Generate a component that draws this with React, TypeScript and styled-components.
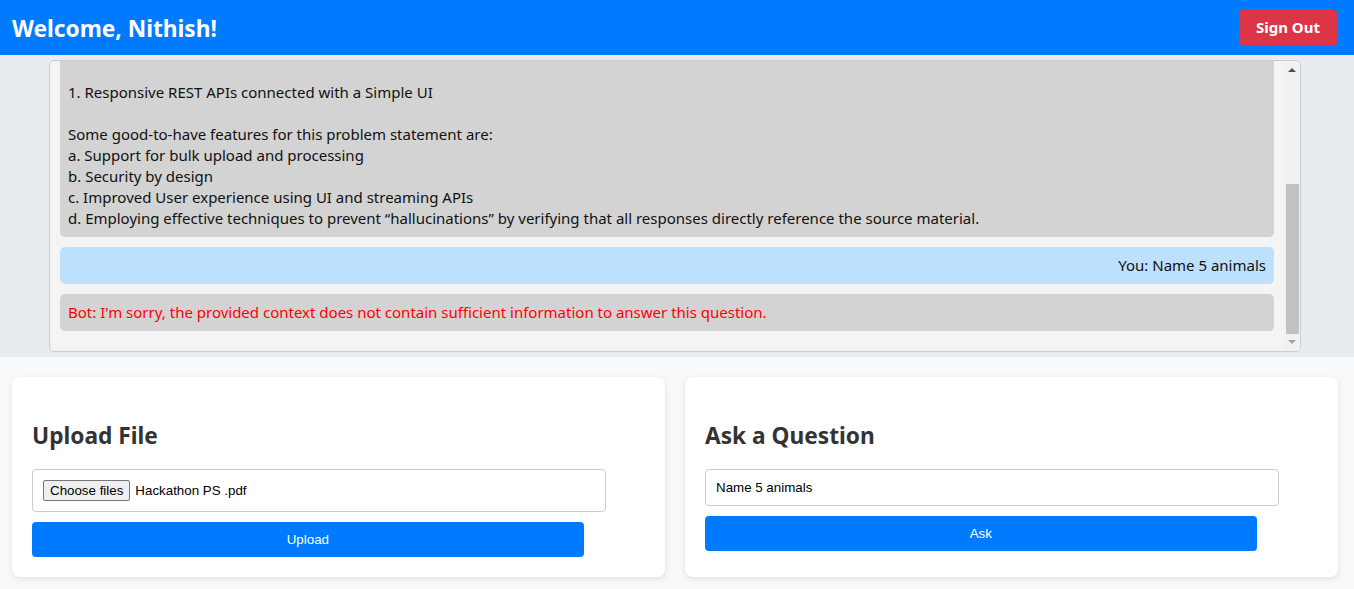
import React, { useLayoutEffect, useRef } from 'react';
import styled, { createGlobalStyle } from 'styled-components';

const GlobalStyle = createGlobalStyle`
  body {
    margin: 0;
    font-family: "Noto Sans", "Open Sans", sans-serif;
    background: #f8f9fa;
    color: #111;
  }
`;

const Header = styled.header`
  display: flex;
  align-items: center;
  justify-content: space-between;
  height: 55px;
  padding: 0 17px 0 12px;
  background: #007bff;
  color: #fff;
`;

const Title = styled.h1`
  margin: 0;
  padding-top: 1px;
  font-size: 22.7px;
  font-weight: 700;
`;

const SignOutButton = styled.button`
  height: 37px;
  padding: 0 17px 1px;
  border: none;
  border-radius: 5px;
  background: #dc3545;
  color: #fff;
  font-family: inherit;
  font-size: 15px;
  font-weight: 700;
  cursor: pointer;
`;

const ChatSection = styled.section`
  background: #e9ecef;
  padding: 5px 0 5px 49px;
`;

const ChatFrame = styled.div`
  position: relative;
  box-sizing: border-box;
  width: 1252px;
  height: 292px;
  overflow: hidden;
  background: #f4f4f4;
  border: 1px solid #ccc;
  border-radius: 5px;
`;

const ChatScroll = styled.div`
  box-sizing: border-box;
  height: 100%;
  padding: 10px 26px 10px 10px;
  overflow-y: auto;
  scrollbar-width: none;

  &::-webkit-scrollbar {
    display: none;
  }
`;

// drawn scrollbar: the runner's browser hides native ones
const ScrollBar = styled.div`
  position: absolute;
  top: 0;
  right: 0;
  bottom: 0;
  width: 16px;
  display: flex;
  flex-direction: column;
  background: #f1f1f1;
`;

const ScrollButton = styled.div<{ $dir: 'up' | 'down' }>`
  height: 17px;
  display: flex;
  align-items: center;
  justify-content: center;

  &::before {
    content: '';
    width: 0;
    height: 0;
    border-left: 4px solid transparent;
    border-right: 4px solid transparent;
    ${(p) =>
      p.$dir === 'up'
        ? 'border-bottom: 4px solid #505050; margin-top: 1px;'
        : 'border-top: 4px solid #a3a3a3; margin-bottom: 1px;'}
  }
`;

const ScrollRail = styled.div`
  flex: 1;
  display: flex;
  flex-direction: column;
  justify-content: flex-end;
  padding: 0 1px 0 2px;
`;

const ScrollThumb = styled.div`
  height: 150px;
  background: #c1c1c1;
`;

const Message = styled.div<{ $from: 'bot' | 'user'; $error?: boolean }>`
  margin-bottom: 10px;
  padding: 8px;
  border-radius: 5px;
  font-size: 15px;
  line-height: 21px;
  white-space: pre-wrap;
  background: ${(p) => (p.$from === 'user' ? '#bde0fd' : '#d3d3d3')};
  text-align: ${(p) => (p.$from === 'user' ? 'right' : 'left')};
  color: ${(p) => (p.$error ? '#ff0000' : '#111')};
`;

const Panels = styled.main`
  display: flex;
  gap: 20px;
  padding: 20px 16px 12px 12px;
`;

const Card = styled.div`
  flex: 1;
  padding: 20px;
  background: #fff;
  border-radius: 8px;
  box-shadow: 0 2px 6px rgba(0, 0, 0, 0.1);
`;

const CardTitle = styled.h2`
  margin: 20px 0 17px;
  padding-top: 3px;
  font-size: 22.7px;
  line-height: 32px;
  font-weight: 700;
  color: #333;
`;

const FileField = styled.label`
  display: flex;
  align-items: center;
  gap: 5px;
  width: 90%;
  height: 21px;
  padding: 10px;
  border: 1px solid #ccc;
  border-radius: 4px;
  font-family: "Liberation Sans", Arial, sans-serif;
  font-size: 13.333px;
  color: #000;

  input {
    display: none;
  }
`;

const ChooseButton = styled.span`
  box-sizing: border-box;
  height: 21px;
  padding: 2px 6px;
  line-height: 15px;
  background: #efefef;
  border: 1px solid #767676;
  border-radius: 2px;
`;

const TextInput = styled.input`
  display: block;
  width: 90%;
  padding: 10px;
  border: 1px solid #ccc;
  border-radius: 4px;
  font-family: "Liberation Sans", Arial, sans-serif;
  font-size: 13.333px;
  color: #000;
  outline: none;
`;

const ActionButton = styled.button`
  display: block;
  width: 90%;
  margin-top: 10px;
  padding: 10px;
  border: none;
  border-radius: 4px;
  background: #007bff;
  color: #fff;
  font-family: "Liberation Sans", Arial, sans-serif;
  font-size: 13.333px;
  cursor: pointer;
`;

const firstAnswer = [
  'Bot: The problem statement is to build a chatbot that answers questions from uploaded documents.',
  '',
  'Participants are expected to build an application where users can upload PDF files and ask questions about them.',
  'The answers should be generated by a language model using only the content of the uploaded documents.',
  '',
  'Expected workflow:',
  '- The user uploads one or more PDF documents',
  '- The system extracts and indexes the text',
  '- The user asks a question in natural language',
  '',
  'The must-have features for this problem statement are:',
  '',
  '1. Responsive REST APIs connected with a Simple UI',
  '',
  'Some good-to-have features for this problem statement are:',
  'a. Support for bulk upload and processing',
  'b. Security by design',
  'c. Improved User experience using UI and streaming APIs',
  'd. Employing effective techniques to prevent \u201challucinations\u201d by verifying that all responses directly reference the source material.',
].join('\n');

const messages = [
  { from: 'bot' as const, text: firstAnswer },
  { from: 'user' as const, text: 'You: Name 5 animals' },
  {
    from: 'bot' as const,
    text: "Bot: I'm sorry, the provided context does not contain sufficient information to answer this question.",
    error: true,
  },
];

const App: React.FC = () => {
  const chatRef = useRef<HTMLDivElement>(null);

  useLayoutEffect(() => {
    if (chatRef.current) {
      chatRef.current.scrollTop = chatRef.current.scrollHeight;
    }
  }, []);

  return (
    <>
      <GlobalStyle />
      <Header>
        <Title>Welcome, Nithish!</Title>
        <SignOutButton>Sign Out</SignOutButton>
      </Header>
      <ChatSection>
        <ChatFrame>
          <ChatScroll ref={chatRef}>
            {messages.map((m, i) => (
              <Message key={i} $from={m.from} $error={m.error}>
                {m.text}
              </Message>
            ))}
          </ChatScroll>
          <ScrollBar>
            <ScrollButton $dir="up" />
            <ScrollRail>
              <ScrollThumb />
            </ScrollRail>
            <ScrollButton $dir="down" />
          </ScrollBar>
        </ChatFrame>
      </ChatSection>
      <Panels>
        <Card>
          <CardTitle>Upload File</CardTitle>
          <FileField>
            <input type="file" multiple />
            <ChooseButton>Choose files</ChooseButton>
            <span>Hackathon PS .pdf</span>
          </FileField>
          <ActionButton>Upload</ActionButton>
        </Card>
        <Card>
          <CardTitle>Ask a Question</CardTitle>
          <TextInput type="text" defaultValue="Name 5 animals" />
          <ActionButton>Ask</ActionButton>
        </Card>
      </Panels>
    </>
  );
};

export default App;
